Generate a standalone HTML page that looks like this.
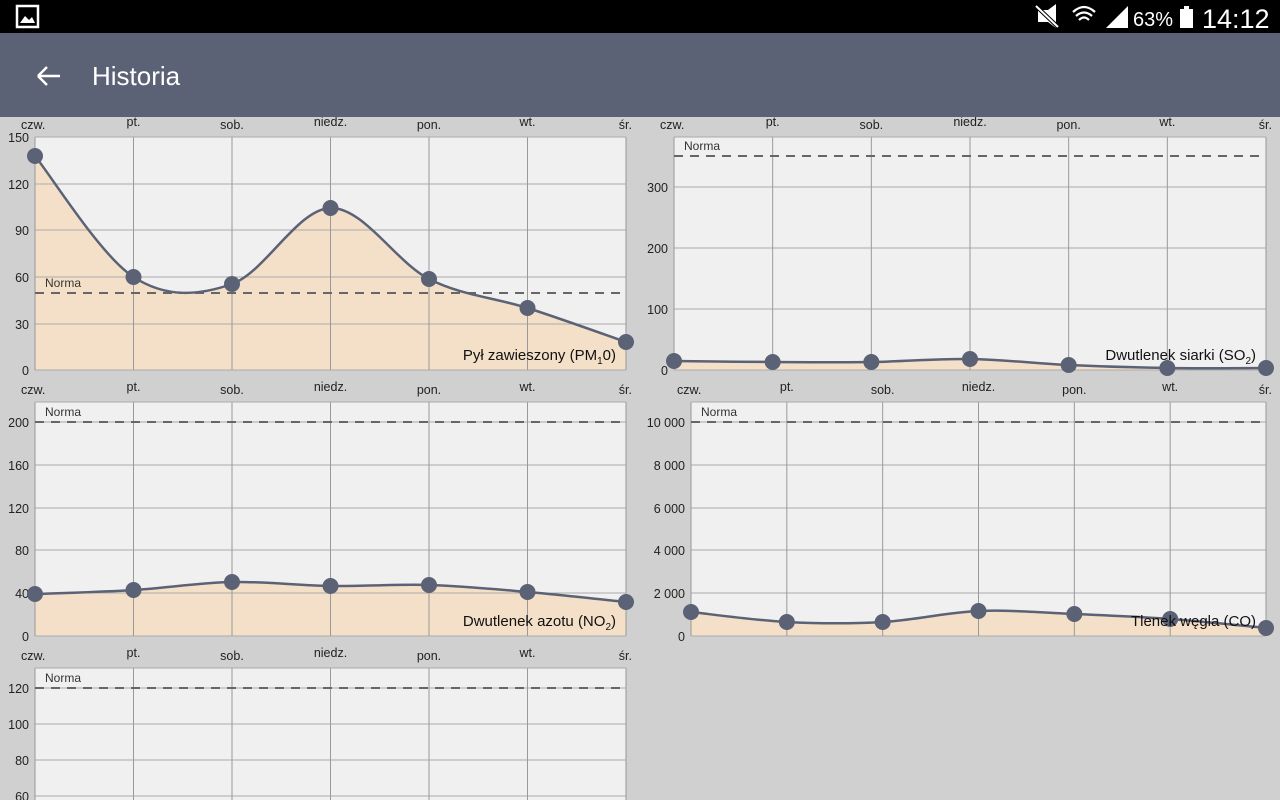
<!DOCTYPE html>
<html style="overflow:hidden"><head><meta charset="utf-8"><style>
html,body{margin:0;width:1280px;height:800px;overflow:hidden}
body{background:#d0d0d0;font-family:"Liberation Sans",sans-serif;position:relative}
#sb{position:absolute;left:0;top:0;width:1280px;height:33px;background:#000;color:#fff}
#hd{position:absolute;left:0;top:33px;width:1280px;height:84px;background:#5b6275;color:#fff}
</style></head><body>
<div id="sb">
<svg width="1280" height="33" style="position:absolute;left:0;top:0">
<rect x="17" y="6" width="21" height="21" fill="none" stroke="#fff" stroke-width="2.5"/>
<path d="M20 23 L25 16 L29 20 L32 17 L35 23 Z" fill="#fff"/>
<path d="M1038 10 L1048 10 L1056 4 L1056 28 L1048 22 L1038 22 Z" fill="#fff"/>
<path d="M1036 6 L1058 27" stroke="#000" stroke-width="4"/><path d="M1036 6 L1058 27" stroke="#fff" stroke-width="2"/>
<path d="M1073 12 Q1084 2 1095 12 M1076 16 Q1084 9 1092 16 M1079 20 Q1084 15 1089 20" stroke="#fff" stroke-width="2.2" fill="none"/>
<path d="M1106 28 L1128 6 L1128 28 Z" fill="#fff"/>
<rect x="1180" y="9" width="13" height="19" fill="#fff"/><rect x="1184" y="6" width="5" height="3" fill="#fff"/>
<text x="1133" y="26" fill="#fff" font-size="20" font-family="Liberation Sans">63%</text>
<text x="1202" y="28" fill="#fff" font-size="27" font-family="Liberation Sans">14:12</text>
</svg></div>
<div id="hd">
<svg width="60" height="84" style="position:absolute;left:0;top:0"><path d="M38 43 L60 43 M38 43 L47 34 M38 43 L47 52" stroke="#fff" stroke-width="2.5" fill="none"/></svg>
<div style="position:absolute;left:92px;top:28px;font-size:26px">Historia</div>
</div>
<svg id="c" width="1280" height="683" style="position:absolute;left:0;top:117px" viewBox="0 117 1280 683"></svg>
<script>
var s='',days=['czw.','pt.','sob.','niedz.','pon.','wt.','śr.'];
function cr(p){var d='M'+p[0][0]+' '+p[0][1];for(var i=0;i<p.length-1;i++){var a=p[i-1]||p[i],b=p[i],c=p[i+1],e=p[i+2]||c;d+=' C'+(b[0]+(c[0]-a[0])/6)+' '+(b[1]+(c[1]-a[1])/6)+' '+(c[0]-(e[0]-b[0])/6)+' '+(c[1]-(e[1]-b[1])/6)+' '+c[0]+' '+c[1];}return d;}
function chart(x0,x1,top,bot,yt,norm,ys,title,sub,after,lblx){
 s+='<rect x="'+x0+'" y="'+top+'" width="'+(x1-x0)+'" height="'+(bot-top)+'" fill="#f0f0f0"/>';
 var xs=[];for(var i=0;i<7;i++)xs.push(x0+(x1-x0)*i/6);
 if(ys){var p=ys.map(function(y,i){return[xs[i],y]});var d=cr(p);
 s+='<path d="'+d+' L'+x1+' '+bot+' L'+x0+' '+bot+' Z" fill="#f4e0c8"/>';}
 yt.forEach(function(t){s+='<line x1="'+x0+'" x2="'+x1+'" y1="'+t[1]+'" y2="'+t[1]+'" stroke="#aaa" stroke-width="1"/>';
  s+='<text x="'+lblx+'" y="'+(t[1]+5)+'" text-anchor="end" font-size="12.5" fill="#222">'+t[0]+'</text>';});
 xs.forEach(function(x,i){s+='<line x1="'+x+'" x2="'+x+'" y1="'+top+'" y2="'+bot+'" stroke="#999" stroke-width="1"/>';
  var anc=i==0?'start':(i==6?'end':'middle');var xx=i==0?x-14:(i==6?x+6:x);
  s+='<text x="'+xx+'" y="'+(top-8-(i%2?3:0))+'" text-anchor="'+anc+'" font-size="12.5" fill="#222">'+days[i]+'</text>';});
 s+='<line x1="'+x0+'" x2="'+x1+'" y1="'+top+'" y2="'+top+'" stroke="#aaa"/>';
 s+='<line x1="'+x0+'" x2="'+x1+'" y1="'+norm+'" y2="'+norm+'" stroke="#666" stroke-width="2" stroke-dasharray="9,7"/>';
 s+='<text x="'+(x0+10)+'" y="'+(norm-6)+'" font-size="12" fill="#333">Norma</text>';
 if(ys){s+='<path d="'+d+'" fill="none" stroke="#5b6275" stroke-width="2.5"/>';
 p.forEach(function(q){s+='<circle cx="'+q[0]+'" cy="'+q[1]+'" r="8" fill="#5b6275"/>';});}
 if(title)s+='<text x="'+(x1-10)+'" y="'+(bot-10)+'" text-anchor="end" font-size="15" fill="#111">'+title+(sub?'<tspan font-size="10" dy="4">'+sub+'</tspan><tspan dy="-4" font-size="15">'+after+'</tspan>':'')+'</text>';
}
chart(35,626,137,370,[[150,137],[120,184],[90,230],[60,277],[30,324],[0,370]],293,[156,277,284,208,279,308,342],'Pył zawieszony (PM','1','0)',29);
chart(674,1266,137,370,[[300,187],[200,248],[100,309],[0,370]],156,[361,362,362,359,365,368,368],'Dwutlenek siarki (SO','2',')',668);
chart(35,626,402,636,[[200,422],[160,465],[120,508],[80,550],[40,593],[0,636]],422,[594,590,582,586,585,592,602],'Dwutlenek azotu (NO','2',')',29);
chart(691,1266,402,636,[['10 000',422],['8 000',465],['6 000',508],['4 000',550],['2 000',593],['0',636]],422,[612,622,622,611,614,619,628],'Tlenek węgla (CO)','','',685);
chart(35,626,668,860,[[120,688],[100,724],[80,760],[60,796]],688,null,'','','',29);
document.getElementById('c').innerHTML=s;
</script>
</body></html>
